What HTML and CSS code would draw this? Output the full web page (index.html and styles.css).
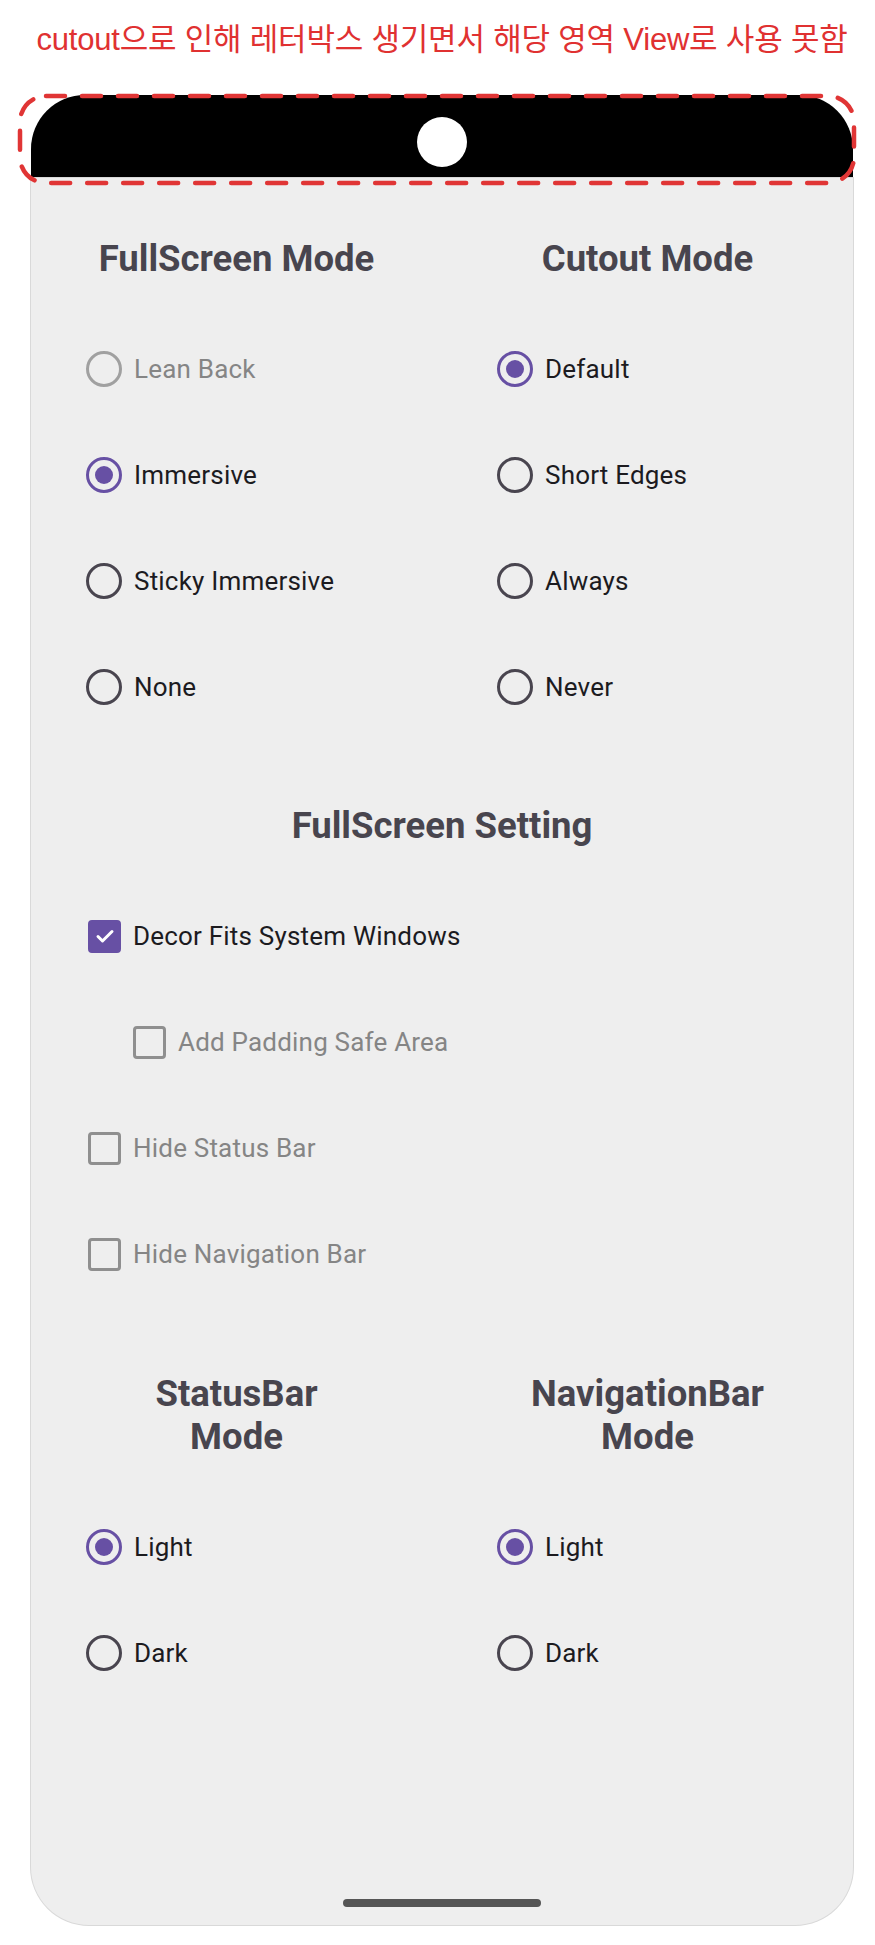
FILE: index.html
```html
<!DOCTYPE html>
<html lang="ko">
<head>
<meta charset="utf-8">
<title>Cutout letterbox</title>
<link rel="stylesheet" href="styles.css">
</head>
<body>
<div class="page">
  <p class="caption">cutout으로 인해 레터박스 생기면서 해당 영역 View로 사용 못함</p>
  <div class="phone">
    <div class="cutout-bar"><span class="camera"></span></div>
    <div class="screen">
      <div class="two-col">
        <div class="col">
          <h2 class="heading">FullScreen Mode</h2>
          <div class="row disabled"><span class="radio"></span><span class="label">Lean Back</span></div>
          <div class="row"><span class="radio checked"></span><span class="label">Immersive</span></div>
          <div class="row"><span class="radio"></span><span class="label">Sticky Immersive</span></div>
          <div class="row"><span class="radio"></span><span class="label">None</span></div>
        </div>
        <div class="col">
          <h2 class="heading">Cutout Mode</h2>
          <div class="row"><span class="radio checked"></span><span class="label">Default</span></div>
          <div class="row"><span class="radio"></span><span class="label">Short Edges</span></div>
          <div class="row"><span class="radio"></span><span class="label">Always</span></div>
          <div class="row"><span class="radio"></span><span class="label">Never</span></div>
        </div>
      </div>

      <div class="settings">
        <h2 class="heading">FullScreen Setting</h2>
        <div class="row cb-row">
          <span class="checkbox checked"><svg viewBox="0 0 24 24" width="24" height="24"><path d="M5 12.5l4.5 4.5L19 7.5" fill="none" stroke="#fff" stroke-width="3" stroke-linecap="round" stroke-linejoin="round"/></svg></span>
          <span class="label">Decor Fits System Windows</span>
        </div>
        <div class="row cb-row indent disabled"><span class="checkbox"></span><span class="label">Add Padding Safe Area</span></div>
        <div class="row cb-row disabled"><span class="checkbox"></span><span class="label">Hide Status Bar</span></div>
        <div class="row cb-row disabled"><span class="checkbox"></span><span class="label">Hide Navigation Bar</span></div>
      </div>

      <div class="two-col bars">
        <div class="col">
          <h2 class="heading">StatusBar<br>Mode</h2>
          <div class="row"><span class="radio checked"></span><span class="label">Light</span></div>
          <div class="row"><span class="radio"></span><span class="label">Dark</span></div>
        </div>
        <div class="col">
          <h2 class="heading">NavigationBar<br>Mode</h2>
          <div class="row"><span class="radio checked"></span><span class="label">Light</span></div>
          <div class="row"><span class="radio"></span><span class="label">Dark</span></div>
        </div>
      </div>

      <div class="home-indicator"></div>
    </div>
  </div>
  <svg class="annotation" width="842" height="95" viewBox="0 0 842 95">
    <rect x="4" y="4" width="834" height="87" rx="26" ry="26" fill="none" stroke="#e03535" stroke-width="4.5" stroke-dasharray="19 17" stroke-linecap="round"/>
  </svg>
</div>
</body>
</html>
```

FILE: styles.css
```css
html, body {
  margin: 0;
  padding: 0;
  background: #ffffff;
}

.page {
  position: relative;
  width: 875px;
  height: 1945px;
  font-family: Roboto, "Noto Sans", sans-serif;
}

.caption {
  margin: 0;
  height: 95px;
  box-sizing: border-box;
  padding: 20px 22px 0 31px;
  text-align: center;
  font-family: "Liberation Sans", "Noto Sans CJK KR", sans-serif;
  font-size: 31px;
  line-height: 40px;
  color: #e03131;
  letter-spacing: -0.2px;
  white-space: nowrap;
}

.phone {
  margin-left: 31px;
  width: 822px;
  display: flex;
  flex-direction: column;
}

.cutout-bar {
  height: 83px;
  background: #000;
  border-radius: 54px 54px 0 0;
  display: flex;
  justify-content: center;
  align-items: flex-start;
  box-sizing: border-box;
  padding-top: 22px;
}

.camera {
  width: 50px;
  height: 50px;
  border-radius: 50%;
  background: #fff;
}

.screen {
  height: 1747px;
  background: #eeeeee;
  border-radius: 0 0 58px 58px;
  box-shadow: 0 0 0 1px #d9d9d9;
  display: flex;
  flex-direction: column;
  box-sizing: border-box;
  padding-top: 59px;
  padding-bottom: 18px;
}

.two-col {
  display: grid;
  grid-template-columns: 1fr 1fr;
}

.col {
  display: flex;
  flex-direction: column;
}

.heading {
  margin: 0 0 36px;
  font-family: Roboto, sans-serif;
  font-weight: 700;
  font-size: 36.5px;
  line-height: 43px;
  color: #48454e;
  text-align: center;
}

.row {
  height: 106px;
  display: flex;
  align-items: center;
  gap: 12px;
  padding-left: 55px;
}

.label {
  font-size: 26px;
  color: #1c1b1f;
  letter-spacing: 0.2px;
}

.disabled .label {
  color: #858585;
}

.radio {
  width: 36px;
  height: 36px;
  box-sizing: border-box;
  border: 3.5px solid #49454f;
  border-radius: 50%;
  display: flex;
  align-items: center;
  justify-content: center;
  flex: none;
}

.radio.checked {
  border-color: #6750a4;
}

.radio.checked::after {
  content: "";
  width: 18px;
  height: 18px;
  border-radius: 50%;
  background: #6750a4;
}

.disabled .radio {
  border-color: #a0a0a0;
}

.settings {
  margin-top: 64px;
  display: flex;
  flex-direction: column;
}

.cb-row {
  padding-left: 57px;
}

.cb-row.indent {
  padding-left: 102px;
}

.checkbox {
  width: 33px;
  height: 33px;
  box-sizing: border-box;
  border: 3.5px solid #8f8f8f;
  border-radius: 4px;
  display: flex;
  align-items: center;
  justify-content: center;
  flex: none;
}

.checkbox.checked {
  background: #6750a4;
  border-color: #6750a4;
}

.bars {
  margin-top: 65px;
}

.home-indicator {
  margin: auto auto 0;
  width: 198px;
  height: 8px;
  border-radius: 4px;
  background: #555555;
}

.annotation {
  position: absolute;
  left: 16px;
  top: 92px;
}
```
